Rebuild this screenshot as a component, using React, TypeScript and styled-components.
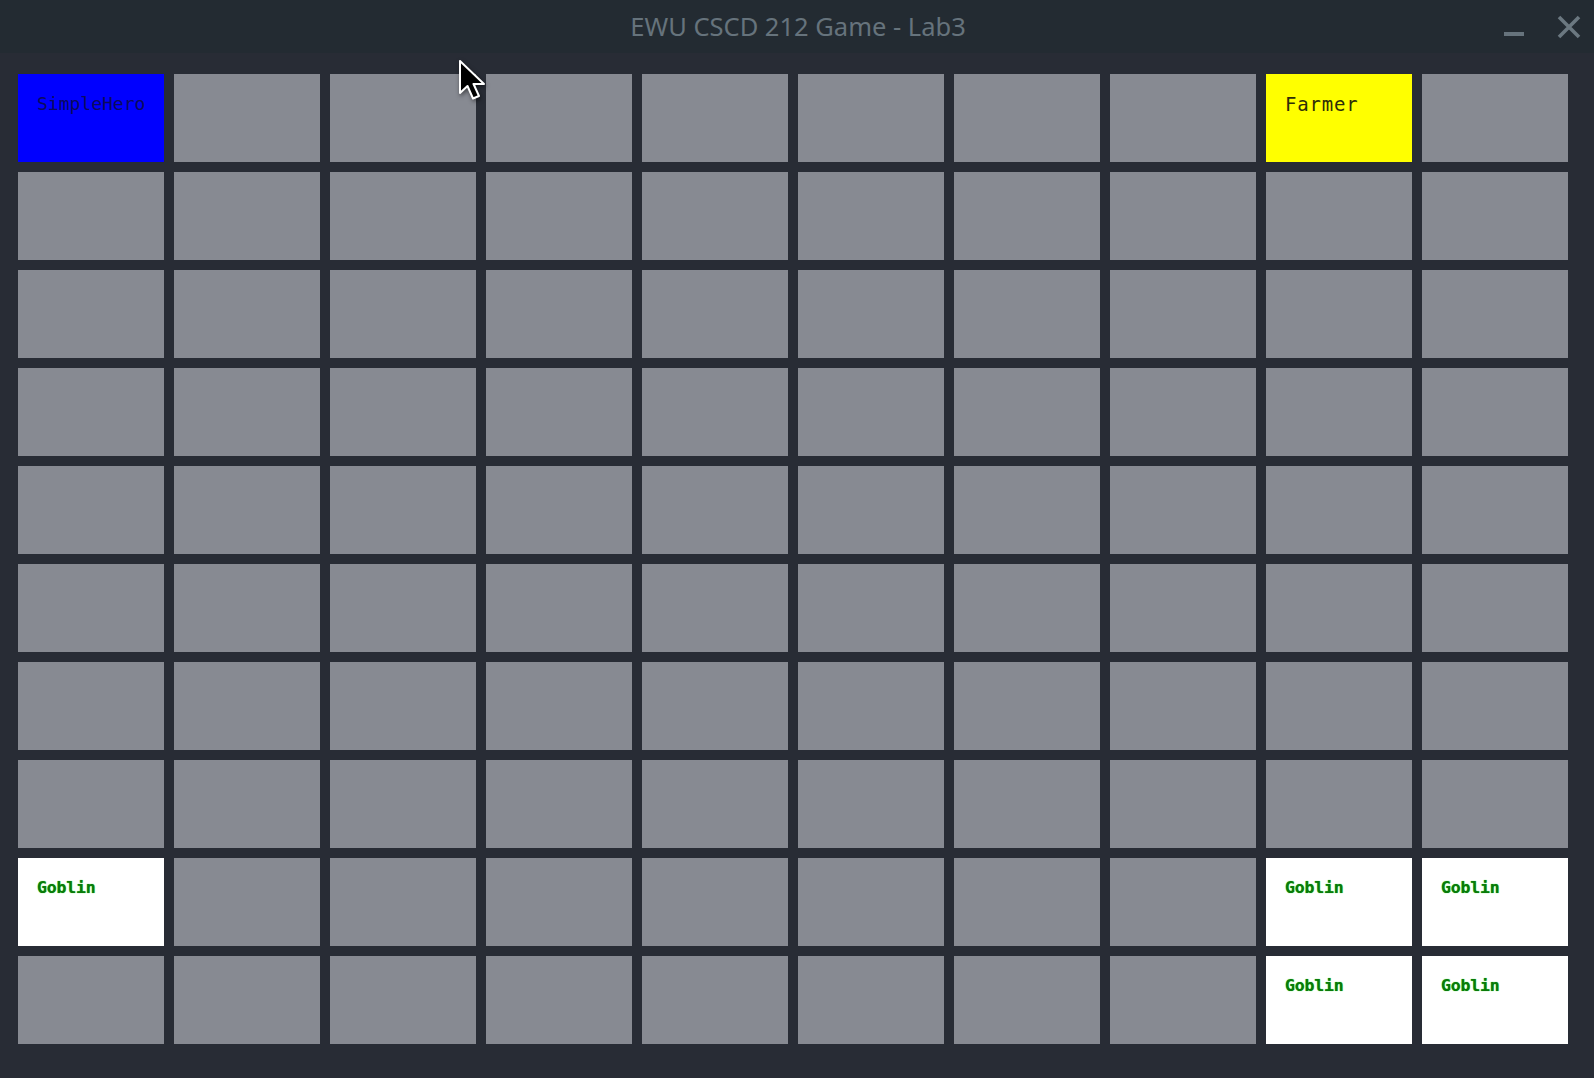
import React from "react";
import styled, { createGlobalStyle } from "styled-components";

const Global = createGlobalStyle`
  html, body { margin: 0; padding: 0; background: #282c35; }
  body { width: 1594px; height: 1078px; overflow: hidden; }
  #root { width: 1594px; height: 1078px; }
`;

const Window = styled.div`
  position: relative;
  width: 1594px;
  height: 1078px;
  display: flex;
  flex-direction: column;
  background: #282c35;
`;

const TitleBar = styled.div`
  height: 53px;
  flex: none;
  background: #232b32;
  display: flex;
  align-items: center;
  justify-content: center;
  position: relative;
`;

const Title = styled.div`
  font-family: "Noto Sans", "Open Sans", sans-serif;
  font-size: 25.5px;
  color: #66737c;
  margin-left: 2px;
  margin-top: -1px;
`;

const Controls = styled.div`
  position: absolute;
  right: 13px;
  top: 0;
  height: 53px;
  display: flex;
  align-items: center;
  gap: 32px;
`;

const Board = styled.div`
  flex: 1;
  display: grid;
  grid-template-columns: repeat(10, 146px);
  grid-template-rows: repeat(10, 88px);
  gap: 10px;
  padding: 21px 26px 34px 18px;
  align-content: start;
`;

type Kind = "empty" | "hero" | "farmer" | "goblin";

const bg: Record<Kind, string> = {
  empty: "#878a92",
  hero: "#0000ff",
  farmer: "#ffff00",
  goblin: "#ffffff",
};

const Cell = styled.div<{ $kind: Kind }>`
  background: ${(p) => bg[p.$kind]};
  padding: 18px 0 0 19px;
  box-sizing: border-box;
`;

const Label = styled.span<{ $kind: Kind }>`
  display: block;
  font-family: "DejaVu Sans Mono", "Liberation Mono", monospace;
  font-size: ${(p) => (p.$kind === "goblin" ? "16.5px" : p.$kind === "farmer" ? "19px" : "18px")};
  font-weight: ${(p) => (p.$kind === "goblin" ? 700 : 400)};
  line-height: 24px;
  letter-spacing: ${(p) => (p.$kind === "farmer" ? "0.8px" : p.$kind === "goblin" ? "-0.2px" : "0")};
  color: ${(p) =>
    p.$kind === "hero" ? "#0b0b5c" : p.$kind === "farmer" ? "#2e2e08" : "#0a7a0a"};
  text-shadow: ${(p) => (p.$kind === "goblin" ? "0 0 1px #22dd22" : "none")};
`;

const Cursor = styled.svg`
  position: absolute;
  left: 458px;
  top: 59px;
  filter: drop-shadow(1px 2px 2px rgba(0, 0, 0, 0.5));
`;

const names: Record<Kind, string> = {
  empty: "",
  hero: "SimpleHero",
  farmer: "Farmer",
  goblin: "Goblin",
};

function kindAt(r: number, c: number): Kind {
  if (r === 0 && c === 0) return "hero";
  if (r === 0 && c === 8) return "farmer";
  if (r === 8 && (c === 0 || c === 8 || c === 9)) return "goblin";
  if (r === 9 && (c === 8 || c === 9)) return "goblin";
  return "empty";
}

export default function App() {
  const cells = [];
  for (let r = 0; r < 10; r++) {
    for (let c = 0; c < 10; c++) {
      const k = kindAt(r, c);
      cells.push(
        <Cell key={`${r}-${c}`} $kind={k}>
          {k !== "empty" && <Label $kind={k}>{names[k]}</Label>}
        </Cell>
      );
    }
  }
  return (
    <Window>
      <Global />
      <TitleBar>
        <Title>EWU CSCD 212 Game - Lab3</Title>
        <Controls>
          <svg width="22" height="24" viewBox="0 0 22 24">
            <rect x="1" y="17" width="20" height="4" fill="#66737c" />
          </svg>
          <svg width="24" height="24" viewBox="0 0 24 24">
            <path d="M2 2 L22 22 M22 2 L2 22" stroke="#6b7880" strokeWidth="3.6" />
          </svg>
        </Controls>
      </TitleBar>
      <Board>{cells}</Board>
      <Cursor width="32" height="44" viewBox="0 0 32 44">
        <path
          d="M2 2 L2 34 L9.5 27 L15 39.5 L21 37 L15.5 25 L26 25 Z"
          fill="#000"
          stroke="#fff"
          strokeWidth="2"
          strokeLinejoin="round"
        />
      </Cursor>
    </Window>
  );
}
